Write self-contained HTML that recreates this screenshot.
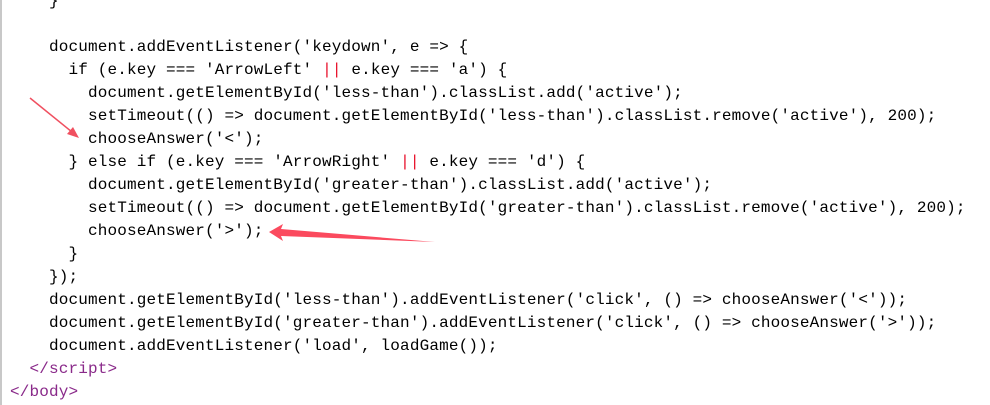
<!DOCTYPE html>
<html><head><meta charset="utf-8"><style>
html,body{margin:0;padding:0;background:#fff;width:990px;height:405px;overflow:hidden;position:relative}
.bar{position:absolute;left:0;top:0;width:2px;height:405px;background:#c8c8c8}
pre{position:absolute;left:10px;top:-10px;margin:0;font-family:"Liberation Mono",monospace;font-size:16px;letter-spacing:0.15px;line-height:23px;color:#000}
.r{color:#e8102a}.p{color:#8a2a8a}
svg{position:absolute;left:0;top:0}
</style></head><body>
<div class="bar"></div>
<pre>    }

    document.addEventListener('keydown', e =&gt; {
      if (e.key === 'ArrowLeft' <span class="r">||</span> e.key === 'a') {
        document.getElementById('less-than').classList.add('active');
        setTimeout(() =&gt; document.getElementById('less-than').classList.remove('active'), 200);
        chooseAnswer('&lt;');
      } else if (e.key === 'ArrowRight' <span class="r">||</span> e.key === 'd') {
        document.getElementById('greater-than').classList.add('active');
        setTimeout(() =&gt; document.getElementById('greater-than').classList.remove('active'), 200);
        chooseAnswer('&gt;');
      }
    });
    document.getElementById('less-than').addEventListener('click', () =&gt; chooseAnswer('&lt;'));
    document.getElementById('greater-than').addEventListener('click', () =&gt; chooseAnswer('&gt;'));
    document.addEventListener('load', loadGame());
  <span class="p">&lt;/script&gt;</span>
<span class="p">&lt;/body&gt;</span></pre>
<svg width="990" height="405">
<line x1="30" y1="98" x2="72" y2="132" stroke="#f05060" stroke-width="1.5"/>
<polygon points="79,138 67,134 73,127" fill="#f05060"/>
<polygon points="269,232 283,224 281,229 435,242 281,236 283,241" fill="#fb4a5e"/>
</svg>
</body></html>
